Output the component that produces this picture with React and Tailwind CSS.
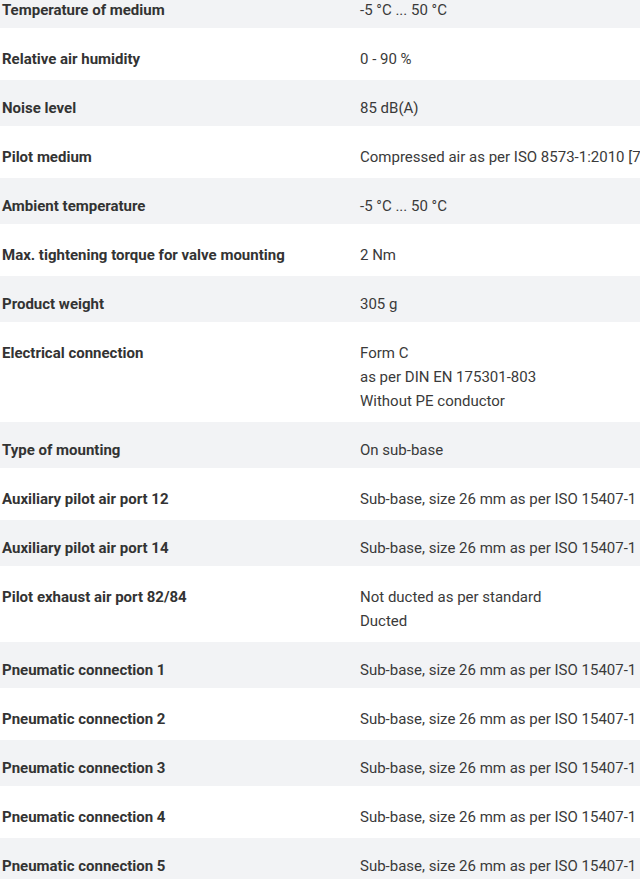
const specs = [
  { label: "Temperature of medium", value: ["-5 °C ... 50 °C"] },
  { label: "Relative air humidity", value: ["0 - 90 %"] },
  { label: "Noise level", value: ["85 dB(A)"] },
  { label: "Pilot medium", value: ["Compressed air as per ISO 8573-1:2010 [7:4:4]"] },
  { label: "Ambient temperature", value: ["-5 °C ... 50 °C"] },
  { label: "Max. tightening torque for valve mounting", value: ["2 Nm"] },
  { label: "Product weight", value: ["305 g"] },
  {
    label: "Electrical connection",
    value: ["Form C", "as per DIN EN 175301-803", "Without PE conductor"],
  },
  { label: "Type of mounting", value: ["On sub-base"] },
  { label: "Auxiliary pilot air port 12", value: ["Sub-base, size 26 mm as per ISO 15407-1"] },
  { label: "Auxiliary pilot air port 14", value: ["Sub-base, size 26 mm as per ISO 15407-1"] },
  { label: "Pilot exhaust air port 82/84", value: ["Not ducted as per standard", "Ducted"] },
  { label: "Pneumatic connection 1", value: ["Sub-base, size 26 mm as per ISO 15407-1"] },
  { label: "Pneumatic connection 2", value: ["Sub-base, size 26 mm as per ISO 15407-1"] },
  { label: "Pneumatic connection 3", value: ["Sub-base, size 26 mm as per ISO 15407-1"] },
  { label: "Pneumatic connection 4", value: ["Sub-base, size 26 mm as per ISO 15407-1"] },
  { label: "Pneumatic connection 5", value: ["Sub-base, size 26 mm as per ISO 15407-1"] },
];

const SpecRow = ({ spec, striped }) => {
  return (
    <div
      className={
        "grid grid-cols-[360px_1fr] pt-4 pb-[6px] border-b-[3px] border-white leading-6 " +
        (striped ? "bg-[#f2f3f5]" : "bg-white")
      }
    >
      <div className="pl-[2px] pr-4 font-bold text-[#333333]">{spec.label}</div>
      {/* the long pilot medium value runs off the right edge, as on the page */}
      <div className="text-[#3a3a3a] whitespace-nowrap">
        {spec.value.map((line) => (
          <div key={line}>{line}</div>
        ))}
      </div>
    </div>
  );
};

export default function App() {
  return (
    <div className="w-[640px] h-[879px] overflow-hidden bg-white font-['Roboto',sans-serif] text-[15px]">
      <div className="-mt-[18px]">
        {specs.map((spec, i) => (
          <SpecRow key={spec.label} spec={spec} striped={i % 2 === 0} />
        ))}
      </div>
    </div>
  );
}
